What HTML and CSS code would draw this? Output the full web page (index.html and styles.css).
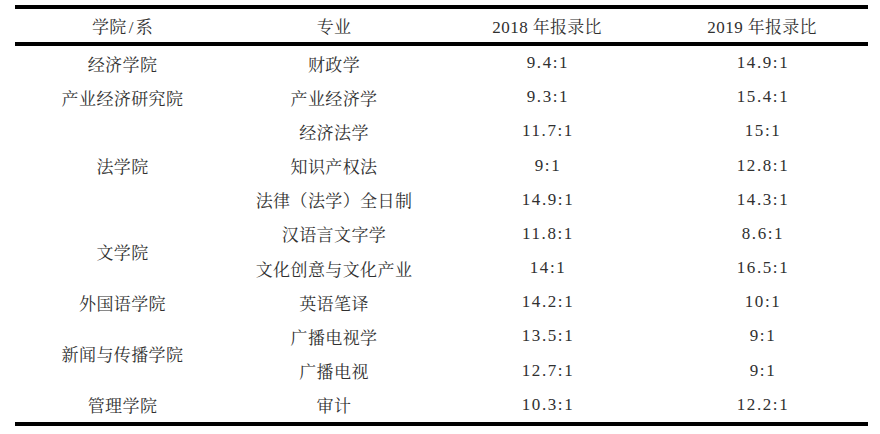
FILE: index.html
```html
<!DOCTYPE html>
<html lang="zh-CN">
<head>
<meta charset="utf-8">
<link rel="stylesheet" href="styles.css">
</head>
<body>
<div class="wrap">
<table class="ratio">
  <colgroup>
    <col class="c1"><col class="c2"><col class="c3"><col class="c4">
  </colgroup>
  <thead>
    <tr><th>学院<span class="slash">/</span>系</th><th>专业</th><th><span class="lat">2018</span> 年报录比</th><th><span class="lat">2019</span> 年报录比</th></tr>
  </thead>
  <tbody>
    <tr><td>经济学院</td><td>财政学</td><td class="num">9.4:1</td><td class="num">14.9:1</td></tr>
    <tr><td>产业经济研究院</td><td>产业经济学</td><td class="num">9.3:1</td><td class="num">15.4:1</td></tr>
    <tr><td rowspan="3">法学院</td><td>经济法学</td><td class="num">11.7:1</td><td class="num">15:1</td></tr>
    <tr><td>知识产权法</td><td class="num">9:1</td><td class="num">12.8:1</td></tr>
    <tr><td>法律（法学）全日制</td><td class="num">14.9:1</td><td class="num">14.3:1</td></tr>
    <tr><td rowspan="2">文学院</td><td>汉语言文字学</td><td class="num">11.8:1</td><td class="num">8.6:1</td></tr>
    <tr><td>文化创意与文化产业</td><td class="num">14:1</td><td class="num">16.5:1</td></tr>
    <tr><td>外国语学院</td><td>英语笔译</td><td class="num">14.2:1</td><td class="num">10:1</td></tr>
    <tr><td rowspan="2">新闻与传播学院</td><td>广播电视学</td><td class="num">13.5:1</td><td class="num">9:1</td></tr>
    <tr><td>广播电视</td><td class="num">12.7:1</td><td class="num">9:1</td></tr>
    <tr><td>管理学院</td><td>审计</td><td class="num">10.3:1</td><td class="num">12.2:1</td></tr>
  </tbody>
</table>
</div>
</body>
</html>
```

FILE: styles.css
```css
html, body {
  margin: 0;
  padding: 0;
  background: #ffffff;
}

.wrap {
  padding: 5px 12px 0 15px;
}

.ratio {
  width: 853px;
  border-collapse: collapse;
  table-layout: fixed;
  font-family: "Liberation Serif", "Noto Serif CJK SC", "Noto Sans CJK SC", serif;
  font-size: 17px;
  color: #303030;
}

.c1 { width: 215px; }
.c2 { width: 208px; }
.c3 { width: 218px; }
.c4 { width: 212px; }

.ratio thead tr {
  border-top: 4px solid #000;
  border-bottom: 4px solid #000;
}

.ratio tbody tr:last-child {
  border-bottom: 4px solid #000;
}

.ratio th {
  font-weight: normal;
  height: 33px;
  padding: 0;
  text-align: center;
  vertical-align: middle;
  letter-spacing: 0.3px;
}

.slash {
  margin: 0 2px;
}

.ratio td {
  height: 34.18px;
  padding: 0;
  text-align: center;
  vertical-align: middle;
  letter-spacing: 0.4px;
}

.lat {
  letter-spacing: 0.5px;
}

.ratio td.num {
  letter-spacing: 1.6px;
  padding-left: 2px;
}
```
